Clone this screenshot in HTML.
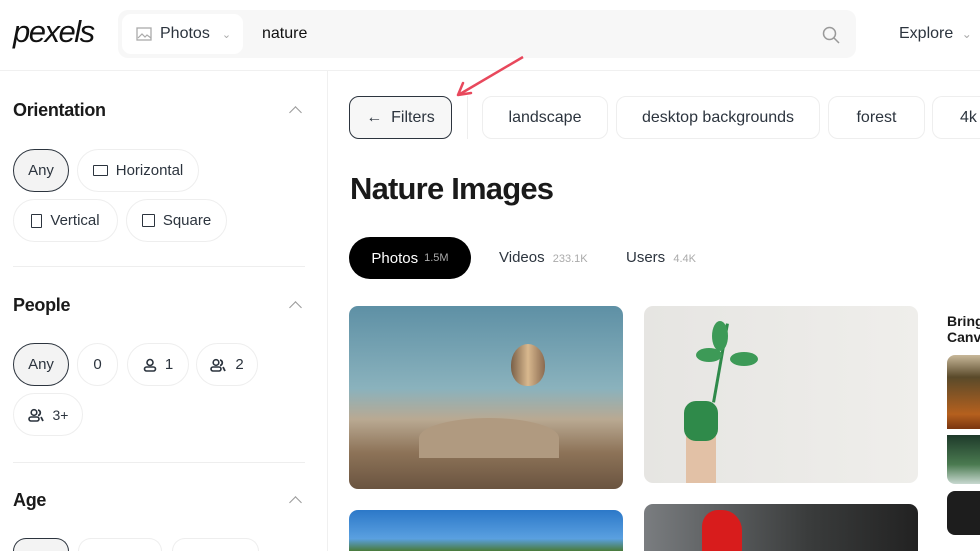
<!DOCTYPE html>
<html><head><meta charset="utf-8"><style>
*{box-sizing:border-box;margin:0;padding:0}
html,body{width:980px;height:551px;overflow:hidden}
body{background:#fff;font-family:"Liberation Sans",sans-serif;color:#2c343e;position:relative}
.a{position:absolute}
.pill{position:absolute;height:43px;border:1px solid #eee;border-radius:22px;display:flex;align-items:center;justify-content:center;font-size:15px;color:#2c343e;gap:8px;background:#fff}
.sel{border:1.5px solid #2c343e;background:#f3f3f3}
.h{position:absolute;left:13px;font-size:18px;font-weight:bold;color:#1a1a1a;letter-spacing:-0.3px}
.chev{position:absolute;left:291px;width:9px;height:9px;border-left:1.5px solid #999;border-top:1.5px solid #999;transform:rotate(45deg)}
.div{position:absolute;left:13px;width:292px;height:1px;background:#eee}
.tag{position:absolute;top:96px;height:43px;border:1px solid #eee;border-radius:10px;display:flex;align-items:center;justify-content:center;font-size:16px;color:#2c343e}
.img{position:absolute;border-radius:9px;overflow:hidden}
.bot{position:absolute;top:538px;height:13px;border:1px solid #eee;border-bottom:none;border-radius:22px 22px 0 0;background:#fff}
</style></head><body>
<div class="a" style="left:13px;top:14px;font-family:'Liberation Sans',sans-serif;font-style:italic;font-size:31px;color:#111;letter-spacing:-1.5px">pexels</div>
<div class="a" style="left:118px;top:10px;width:738px;height:48px;background:#f7f7f7;border-radius:10px"></div>
<div class="a" style="left:122px;top:14px;width:121px;height:40px;background:#fff;border-radius:9px;font-size:16px;display:flex;align-items:center;padding-left:14px;gap:8px">
<svg width="16" height="14"><rect x="1" y="1" width="14" height="12" fill="none" stroke="#aaa" stroke-width="1.3"/><path d="M2 11l4-4 3 3 2-2 4 3" fill="none" stroke="#aaa" stroke-width="1.2"/></svg>Photos<span style="color:#aaa;font-size:11px;margin-left:4px">&#8964;</span></div>
<div class="a" style="left:262px;top:25px;font-size:16px;color:#111">nature</div>
<svg class="a" style="left:822px;top:26px" width="18" height="18"><circle cx="7.5" cy="7.5" r="6" fill="none" stroke="#999" stroke-width="1.5"/><path d="M12 12l5 5" stroke="#999" stroke-width="1.5"/></svg>
<div class="a" style="left:899px;top:25px;font-size:16px;color:#2c343e">Explore <span style="color:#aaa;font-size:12px;margin-left:4px">&#8964;</span></div>
<div class="a" style="left:0;top:70px;width:980px;height:1px;background:#f0f0f0"></div>
<div class="a" style="left:327px;top:71px;width:1px;height:480px;background:#f0f0f0"></div>

<div class="h" style="top:100px">Orientation</div><div class="chev" style="top:108px"></div>
<div class="pill sel" style="left:13px;top:149px;width:56px">Any</div>
<div class="pill" style="left:77px;top:149px;width:122px"><span style="width:15px;height:11px;border:1.5px solid #2c343e;border-radius:1px"></span>Horizontal</div>
<div class="pill" style="left:13px;top:199px;width:105px"><span style="width:11px;height:14px;border:1.5px solid #2c343e;border-radius:1px"></span>Vertical</div>
<div class="pill" style="left:126px;top:199px;width:101px"><span style="width:13px;height:13px;border:1.5px solid #2c343e;border-radius:1px"></span>Square</div>
<div class="div" style="top:266px"></div>

<div class="h" style="top:295px">People</div><div class="chev" style="top:303px"></div>
<div class="pill sel" style="left:13px;top:343px;width:56px">Any</div>
<div class="pill" style="left:77px;top:343px;width:41px">0</div>
<div class="pill" style="left:127px;top:343px;width:62px"><svg width="14" height="14"><circle cx="7" cy="4.5" r="3" fill="none" stroke="#2c343e" stroke-width="1.6"/><rect x="1.5" y="9" width="11" height="4" rx="2" fill="none" stroke="#2c343e" stroke-width="1.6"/></svg>1</div>
<div class="pill" style="left:196px;top:343px;width:62px"><svg width="17" height="14"><circle cx="6" cy="4.5" r="2.8" fill="none" stroke="#2c343e" stroke-width="1.6"/><rect x="1" y="9" width="10" height="4" rx="2" fill="none" stroke="#2c343e" stroke-width="1.6"/><path d="M10 2a2.8 2.8 0 0 1 0 5.5M13 9l2 4" stroke="#2c343e" stroke-width="1.8" fill="none"/></svg>2</div>
<div class="pill" style="left:13px;top:393px;width:70px;font-size:14px"><svg width="17" height="14"><circle cx="6" cy="4.5" r="2.8" fill="none" stroke="#2c343e" stroke-width="1.6"/><rect x="1" y="9" width="10" height="4" rx="2" fill="none" stroke="#2c343e" stroke-width="1.6"/><path d="M10 2a2.8 2.8 0 0 1 0 5.5M13 9l2 4" stroke="#2c343e" stroke-width="1.8" fill="none"/></svg>3+</div>
<div class="div" style="top:462px"></div>
<div class="h" style="top:490px">Age</div><div class="chev" style="top:498px"></div>
<div class="bot" style="left:13px;width:56px;border:1.5px solid #2c343e;border-bottom:none;background:#f3f3f3"></div>
<div class="bot" style="left:78px;width:84px"></div>
<div class="bot" style="left:172px;width:87px"></div>

<div class="tag" style="left:349px;width:103px;border:1.5px solid #2c343e;background:#f7f7f7">&#8592;&nbsp; Filters</div>
<div class="a" style="left:467px;top:96px;width:1px;height:43px;background:#eee"></div>
<div class="tag" style="left:482px;width:126px">landscape</div>
<div class="tag" style="left:616px;width:204px">desktop backgrounds</div>
<div class="tag" style="left:828px;width:97px">forest</div>
<div class="tag" style="left:932px;width:48px;justify-content:flex-start;padding-left:27px;border-right:none;border-radius:10px 0 0 10px">4k</div>
<svg class="a" style="left:450px;top:52px" width="80" height="50"><path d="M73 5L10 42" stroke="#e8485c" stroke-width="2.5" fill="none"/><path d="M8 43l13-2M8 43l5-12" stroke="#e8485c" stroke-width="2.5" fill="none" stroke-linecap="round"/></svg>

<div class="a" style="left:350px;top:171px;font-size:31px;font-weight:bold;color:#1a1a1a;letter-spacing:-0.8px">Nature Images</div>
<div class="a" style="left:349px;top:237px;width:122px;height:42px;background:#000;border-radius:21px;color:#fff;font-size:15px;display:flex;align-items:center;justify-content:center;gap:6px">Photos <span style="font-size:11px;color:#aaa">1.5M</span></div>
<div class="a" style="left:499px;top:249px;font-size:15px;color:#2c343e">Videos <span style="font-size:11px;color:#aaa;margin-left:4px">233.1K</span></div>
<div class="a" style="left:626px;top:249px;font-size:15px;color:#2c343e">Users <span style="font-size:11px;color:#aaa;margin-left:4px">4.4K</span></div>

<div class="img" style="left:349px;top:306px;width:274px;height:183px;background:linear-gradient(180deg,#5e90a5 0%,#8ab2bd 45%,#b9a992 62%,#8d7358 80%,#6a5440 100%)">
<div class="a" style="left:162px;top:38px;width:34px;height:42px;border-radius:50% 50% 45% 45%;background:linear-gradient(90deg,#7a6048,#d8b88e,#8a6a50)"></div>
<div class="a" style="left:70px;top:112px;width:140px;height:40px;border-radius:50% 50% 0 0;background:#b09a80"></div></div>
<div class="img" style="left:644px;top:306px;width:274px;height:177px;background:linear-gradient(90deg,#e6e5e2,#efeeeb)">
<div class="a" style="left:42px;top:95px;width:30px;height:82px;background:#e2c1a6;border-radius:12px 12px 0 0"></div>
<div class="a" style="left:40px;top:95px;width:34px;height:40px;background:#2f8a4a;border-radius:12px"></div>
<div class="a" style="left:75px;top:17px;width:3px;height:80px;background:#2f8a4a;transform:rotate(10deg)"></div>
<div class="a" style="left:68px;top:15px;width:16px;height:30px;background:#3d9a57;border-radius:50%"></div>
<div class="a" style="left:86px;top:46px;width:28px;height:14px;background:#3d9a57;border-radius:50%"></div>
<div class="a" style="left:52px;top:42px;width:26px;height:14px;background:#3d9a57;border-radius:50%"></div></div>
<div class="img" style="left:349px;top:510px;width:274px;height:41px;border-radius:9px 9px 0 0;background:linear-gradient(180deg,#2c78c8,#5aa0e0 70%,#4a7a3a)"></div>
<div class="img" style="left:644px;top:504px;width:274px;height:47px;border-radius:9px 9px 0 0;background:linear-gradient(90deg,#7a7d80,#3a3c3c 60%,#222)"><div class="a" style="left:58px;top:6px;width:40px;height:41px;background:#d81c1c;border-radius:40% 50% 0 0"></div></div>

<div class="a" style="left:947px;top:313px;font-size:14px;font-weight:bold;color:#1a1a1a;line-height:16px">Bring<br>Canv</div>
<div class="a" style="left:947px;top:355px;width:33px;height:74px;border-radius:8px 0 0 0;background:linear-gradient(180deg,#c8b89a,#5a4a2a 30%,#b5601e 80%,#7a3510)"></div>
<div class="a" style="left:947px;top:435px;width:33px;height:49px;border-radius:0 0 0 8px;background:linear-gradient(180deg,#1e3a2a,#4a7a50 60%,#c8d8d0)"></div>
<div class="a" style="left:947px;top:491px;width:33px;height:44px;border-radius:8px 0 0 8px;background:#1d1d1d"></div>
</body></html>
